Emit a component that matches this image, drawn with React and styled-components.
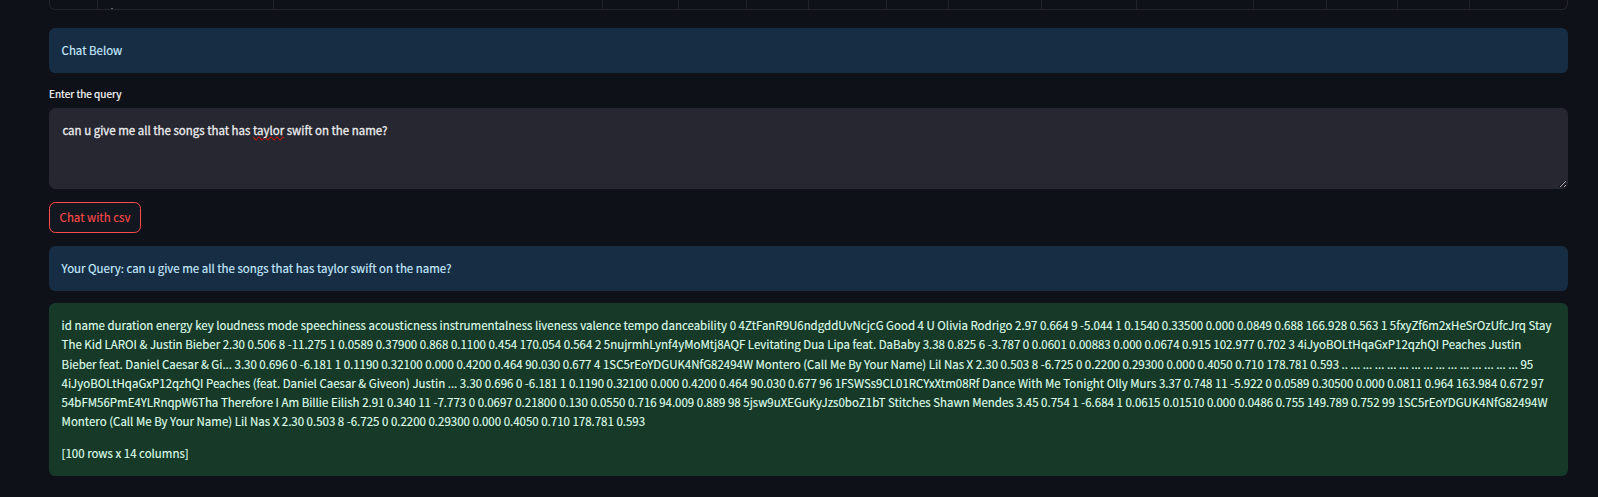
import React from "react";
import styled, { createGlobalStyle } from "styled-components";

const GlobalStyle = createGlobalStyle`
  *, *::before, *::after { box-sizing: border-box; }
  html { color-scheme: dark; }
  body {
    margin: 0;
    overflow: hidden;
    background: #0e1117;
    color: #fafafa;
    font-family: "Noto Sans CJK SC", "Noto Sans", sans-serif;
    font-size: 11.472px;
    line-height: 19.2px;
    -webkit-text-stroke: 0.15px currentColor;
  }
`;

const Page = styled.main`
  width: 1598px;
  height: 497px;
  padding: 0 30px 0 49px;
  overflow: hidden;
`;

const TableEnd = styled.div`
  display: flex;
  height: 10px;
  margin-bottom: 18px;
  border: 1px solid #232529;
  border-top: 0;
  border-radius: 0 0 6px 6px;
  overflow: hidden;
`;

const Cell = styled.div`
  display: flex;
  align-items: flex-end;
  flex: 0 0 ${(p) => p.$width}px;
  padding-left: 13px;
  border-right: 1px solid #202227;
`;

const ClippedMark = styled.i`
  width: 2px;
  height: 1px;
  background: #60636a;
`;

const Alert = styled.section`
  margin-bottom: ${(p) => p.$after || 0}px;
  padding: ${(p) => (p.$success ? "13.4px 12.6px 12.8px" : "12.8px 12.6px")};
  border-radius: 6.4px;
  background: ${(p) => (p.$success ? "#173928" : "#172d43")};
  color: ${(p) => (p.$success ? "#dffde9" : "#c7ebff")};
`;

const Paragraph = styled.p`
  margin: 0;
  white-space: nowrap;
  & + & { margin-top: 12.8px; }
`;

const Line = styled.span`
  display: block;
`;

const Label = styled.label`
  display: block;
  height: 22px;
  font-size: 10.05px;
  line-height: 15px;
  -webkit-text-stroke-width: 0.2px;
`;

const TextArea = styled.div`
  height: 81px;
  margin-bottom: 13px;
  padding: 12px 12.4px;
  border: 1px solid #262730;
  border-radius: 6.4px;
  background: #262730;
  color: #ececee;
  -webkit-text-stroke-width: 0.3px;
  overflow: auto;
  resize: vertical;
`;

const Misspelled = styled.span`
  text-decoration-line: spelling-error;
`;

const Button = styled.button`
  display: block;
  height: 31px;
  width: 92px;
  margin: 0 0 13px;
  padding: 0;
  border: 1px solid #ff4b4b;
  border-radius: 6.4px;
  background: #131720;
  color: #ff4b4b;
  font: inherit;
  -webkit-text-stroke-width: 0.1px;
`;

const columns = [48, 176, 329, 76, 68, 62, 78, 62, 93, 95, 117, 73, 71, 72];

const lines = [
  "id name duration energy key loudness mode speechiness acousticness instrumentalness liveness valence tempo danceability 0 4ZtFanR9U6ndgddUvNcjcG Good 4 U Olivia Rodrigo 2.97 0.664 9 -5.044 1 0.1540 0.33500 0.000 0.0849 0.688 166.928 0.563 1 5fxyZf6m2xHeSrOzUfcJrq Stay",
  "The Kid LAROI & Justin Bieber 2.30 0.506 8 -11.275 1 0.0589 0.37900 0.868 0.1100 0.454 170.054 0.564 2 5nujrmhLynf4yMoMtj8AQF Levitating Dua Lipa feat. DaBaby 3.38 0.825 6 -3.787 0 0.0601 0.00883 0.000 0.0674 0.915 102.977 0.702 3 4iJyoBOLtHqaGxP12qzhQI Peaches Justin",
  "Bieber feat. Daniel Caesar & Gi... 3.30 0.696 0 -6.181 1 0.1190 0.32100 0.000 0.4200 0.464 90.030 0.677 4 1SC5rEoYDGUK4NfG82494W Montero (Call Me By Your Name) Lil Nas X 2.30 0.503 8 -6.725 0 0.2200 0.29300 0.000 0.4050 0.710 178.781 0.593 .. ... ... ... ... ... ... ... ... ... ... ... ... ... ... 95",
  "4iJyoBOLtHqaGxP12qzhQI Peaches (feat. Daniel Caesar & Giveon) Justin ... 3.30 0.696 0 -6.181 1 0.1190 0.32100 0.000 0.4200 0.464 90.030 0.677 96 1FSWSs9CL01RCYxXtm08Rf Dance With Me Tonight Olly Murs 3.37 0.748 11 -5.922 0 0.0589 0.30500 0.000 0.0811 0.964 163.984 0.672 97",
  "54bFM56PmE4YLRnqpW6Tha Therefore I Am Billie Eilish 2.91 0.340 11 -7.773 0 0.0697 0.21800 0.130 0.0550 0.716 94.009 0.889 98 5jsw9uXEGuKyJzs0boZ1bT Stitches Shawn Mendes 3.45 0.754 1 -6.684 1 0.0615 0.01510 0.000 0.0486 0.755 149.789 0.752 99 1SC5rEoYDGUK4NfG82494W",
  "Montero (Call Me By Your Name) Lil Nas X 2.30 0.503 8 -6.725 0 0.2200 0.29300 0.000 0.4050 0.710 178.781 0.593",
];

export default function App() {
  return (
    <>
      <GlobalStyle />
      <Page>
        <TableEnd>
          {columns.map((width, i) => (
            <Cell key={i} $width={width}>{i === 1 && <ClippedMark />}</Cell>
          ))}
        </TableEnd>
        <Alert $after={13}><Paragraph>Chat Below</Paragraph></Alert>
        <Label>Enter the query</Label>
        <TextArea role="textbox">
          can u give me all the songs that has <Misspelled>taylor</Misspelled> swift on the name?
        </TextArea>
        <Button>Chat with csv</Button>
        <Alert $after={12.2}>
          <Paragraph>Your Query: can u give me all the songs that has taylor swift on the name?</Paragraph>
        </Alert>
        <Alert $success>
          <Paragraph>
            {lines.map((text, i) => <Line key={i}>{text}</Line>)}
          </Paragraph>
          <Paragraph>[100 rows x 14 columns]</Paragraph>
        </Alert>
      </Page>
    </>
  );
}
